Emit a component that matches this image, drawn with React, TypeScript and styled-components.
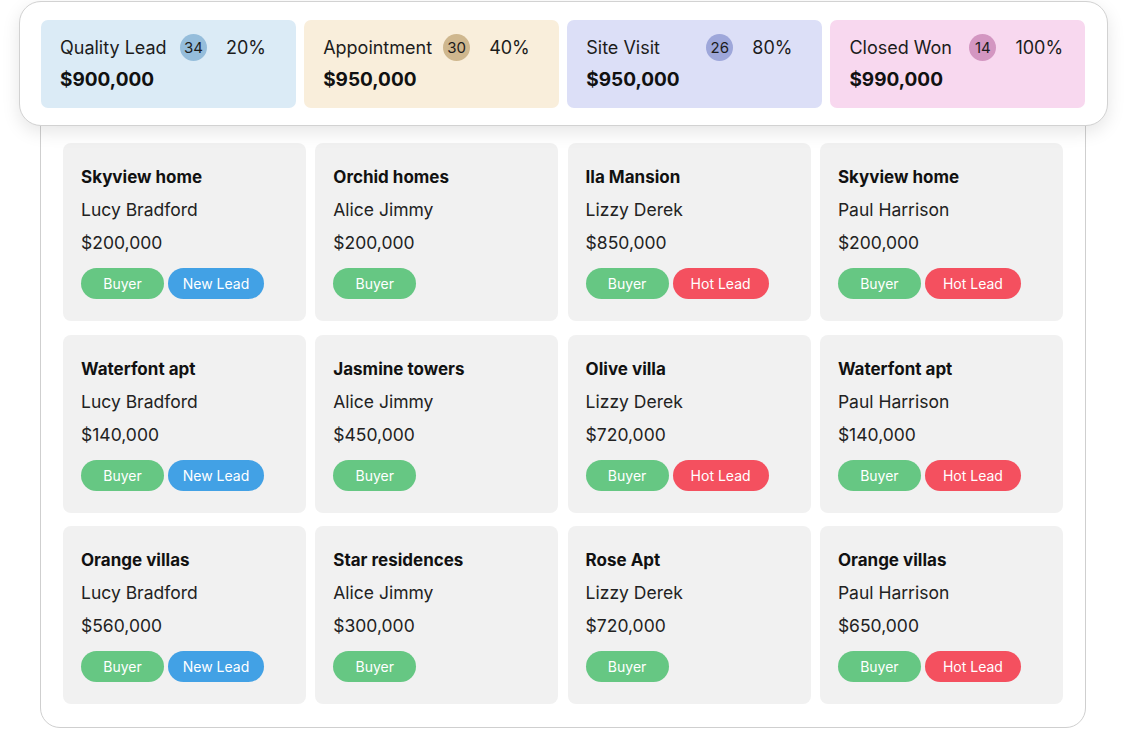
import { createGlobalStyle, styled } from "styled-components";

const GlobalStyle = createGlobalStyle`
  html, body {
    margin: 0;
    padding: 0;
    background: #ffffff;
    font-family: Inter, "Open Sans", sans-serif;
    color: #1d1d1d;
  }
`;

type Stage = {
  label: string;
  count: number;
  percent: string;
  amount: string;
  bg: string;
  badge: string;
};

const stages: Stage[] = [
  { label: "Quality Lead", count: 34, percent: "20%", amount: "$900,000", bg: "#dbebf6", badge: "#95bddb" },
  { label: "Appointment", count: 30, percent: "40%", amount: "$950,000", bg: "#f9eedb", badge: "#cfb78e" },
  { label: "Site Visit", count: 26, percent: "80%", amount: "$950,000", bg: "#dcdff7", badge: "#9ea7da" },
  { label: "Closed Won", count: 14, percent: "100%", amount: "$990,000", bg: "#f8d8ef", badge: "#d396c1" },
];

type Tag = "Buyer" | "New Lead" | "Hot Lead";

type Deal = { title: string; owner: string; price: string; tags: Tag[] };

const deals: Deal[] = [
  { title: "Skyview home", owner: "Lucy Bradford", price: "$200,000", tags: ["Buyer", "New Lead"] },
  { title: "Orchid homes", owner: "Alice Jimmy", price: "$200,000", tags: ["Buyer"] },
  { title: "Ila Mansion", owner: "Lizzy Derek", price: "$850,000", tags: ["Buyer", "Hot Lead"] },
  { title: "Skyview home", owner: "Paul Harrison", price: "$200,000", tags: ["Buyer", "Hot Lead"] },
  { title: "Waterfont apt", owner: "Lucy Bradford", price: "$140,000", tags: ["Buyer", "New Lead"] },
  { title: "Jasmine towers", owner: "Alice Jimmy", price: "$450,000", tags: ["Buyer"] },
  { title: "Olive villa", owner: "Lizzy Derek", price: "$720,000", tags: ["Buyer", "Hot Lead"] },
  { title: "Waterfont apt", owner: "Paul Harrison", price: "$140,000", tags: ["Buyer", "Hot Lead"] },
  { title: "Orange villas", owner: "Lucy Bradford", price: "$560,000", tags: ["Buyer", "New Lead"] },
  { title: "Star residences", owner: "Alice Jimmy", price: "$300,000", tags: ["Buyer"] },
  { title: "Rose Apt", owner: "Lizzy Derek", price: "$720,000", tags: ["Buyer"] },
  { title: "Orange villas", owner: "Paul Harrison", price: "$650,000", tags: ["Buyer", "Hot Lead"] },
];

const tagColors: Record<Tag, string> = {
  Buyer: "#66c783",
  "New Lead": "#42a1e5",
  "Hot Lead": "#f4505f",
};

const App = () => {
  return (
    <Page>
      <GlobalStyle />
      <Header>
        {stages.map((s) => (
          <StageCard key={s.label} $bg={s.bg}>
            <StageTop>
              <StageLabel>{s.label}</StageLabel>
              <Badge $bg={s.badge}>{s.count}</Badge>
              <Percent>{s.percent}</Percent>
            </StageTop>
            <StageAmount>{s.amount}</StageAmount>
          </StageCard>
        ))}
      </Header>
      <Board>
        <Grid>
          {deals.map((d, i) => (
            <DealCard key={i}>
              <DealTitle>{d.title}</DealTitle>
              <DealText>{d.owner}</DealText>
              <DealText>{d.price}</DealText>
              <Tags>
                {d.tags.map((t) => (
                  <Pill key={t} $bg={tagColors[t]} $wide={t !== "Buyer"}>
                    {t}
                  </Pill>
                ))}
              </Tags>
            </DealCard>
          ))}
        </Grid>
      </Board>
    </Page>
  );
};

export default App;

const Page = styled.div`
  width: 1127px;
  height: 729px;
  padding: 1px 0 0 19px;
  box-sizing: border-box;
  overflow: hidden;
`;

const Header = styled.div`
  position: relative;
  z-index: 2;
  width: 1089px;
  height: 125px;
  box-sizing: border-box;
  padding: 18px 22px 17px 21px;
  background: #ffffff;
  border: 1px solid #d2d2d2;
  border-radius: 22px;
  box-shadow: 0 6px 18px rgba(0, 0, 0, 0.1);
  display: grid;
  grid-template-columns: repeat(4, 1fr);
  gap: 8.5px;
`;

const StageCard = styled.div<{ $bg: string }>`
  background: ${(p) => p.$bg};
  border-radius: 7px;
  padding: 14px 0 0 19px;
  display: flex;
  flex-direction: column;
  gap: 7px;
`;

const StageTop = styled.div`
  display: flex;
  align-items: center;
  height: 27px;
`;

const StageLabel = styled.span`
  width: 120px;
  font-size: 18px;
  color: #1c1c1c;
  white-space: nowrap;
`;

const Badge = styled.span<{ $bg: string }>`
  width: 27px;
  height: 27px;
  border-radius: 50%;
  background: ${(p) => p.$bg};
  display: flex;
  align-items: center;
  justify-content: center;
  font-size: 15px;
  color: #1c1c1c;
  margin-right: 19px;
`;

const Percent = styled.span`
  font-size: 18px;
  color: #1c1c1c;
`;

const StageAmount = styled.div`
  font-size: 19px;
  font-weight: 700;
  color: #111;
`;

const Board = styled.div`
  position: relative;
  z-index: 1;
  margin: -26px 0 0 21px;
  width: 1046px;
  height: 628px;
  box-sizing: border-box;
  border: 1.5px solid #cfcfcf;
  border-radius: 20px;
  padding: 42px 21px 0 22px;
`;

const Grid = styled.div`
  display: grid;
  grid-template-columns: repeat(4, 243px);
  column-gap: 9.3px;
  row-gap: 13.5px;
`;

const DealCard = styled.div`
  background: #f1f1f1;
  border-radius: 8px;
  height: 178px;
  box-sizing: border-box;
  padding: 23px 18px 21px;
  display: flex;
  flex-direction: column;
`;

const DealTitle = styled.div`
  font-size: 17px;
  line-height: 22px;
  font-weight: 700;
  color: #111;
`;

const DealText = styled.div`
  font-size: 17.5px;
  line-height: 22px;
  margin-top: 11px;
  color: #222;
`;

const Tags = styled.div`
  display: flex;
  gap: 4px;
  margin-top: 14px;
`;

const Pill = styled.span<{ $bg: string; $wide: boolean }>`
  width: ${(p) => (p.$wide ? "96px" : "83px")};
  height: 31px;
  border-radius: 16px;
  background: ${(p) => p.$bg};
  color: #ffffff;
  font-size: 14px;
  display: flex;
  align-items: center;
  justify-content: center;
`;
